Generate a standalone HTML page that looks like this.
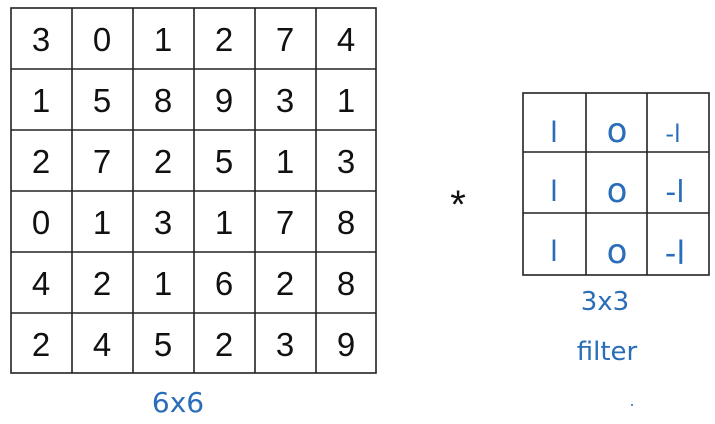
<!DOCTYPE html>
<html><head><style>
html,body{margin:0;padding:0;background:#fff;width:715px;height:424px;overflow:hidden}
</style></head><body>
<svg width="715" height="424" xmlns="http://www.w3.org/2000/svg">
<rect width="715" height="424" fill="#fff"/>
<g stroke="#222" stroke-width="1.6" fill="none">
<rect x="11" y="8" width="365" height="365"/>
<line x1="72" y1="8" x2="72" y2="373"/><line x1="133" y1="8" x2="133" y2="373"/><line x1="194" y1="8" x2="194" y2="373"/><line x1="255" y1="8" x2="255" y2="373"/><line x1="316" y1="8" x2="316" y2="373"/>
<line x1="11" y1="69" x2="376" y2="69"/><line x1="11" y1="130" x2="376" y2="130"/><line x1="11" y1="191" x2="376" y2="191"/><line x1="11" y1="252" x2="376" y2="252"/><line x1="11" y1="313" x2="376" y2="313"/>
<rect x="523" y="93" width="186" height="182"/>
<line x1="586" y1="93" x2="586" y2="275"/><line x1="647" y1="93" x2="647" y2="275"/>
<line x1="523" y1="152" x2="709" y2="152"/><line x1="523" y1="213" x2="709" y2="213"/>
</g>
<g font-family="Liberation Sans, sans-serif" font-size="33" fill="#111" text-anchor="middle">
<text x="41" y="51">3</text><text x="102" y="51">0</text><text x="163" y="51">1</text><text x="224" y="51">2</text><text x="285" y="51">7</text><text x="346" y="51">4</text>
<text x="41" y="112">1</text><text x="102" y="112">5</text><text x="163" y="112">8</text><text x="224" y="112">9</text><text x="285" y="112">3</text><text x="346" y="112">1</text>
<text x="41" y="173">2</text><text x="102" y="173">7</text><text x="163" y="173">2</text><text x="224" y="173">5</text><text x="285" y="173">1</text><text x="346" y="173">3</text>
<text x="41" y="234">0</text><text x="102" y="234">1</text><text x="163" y="234">3</text><text x="224" y="234">1</text><text x="285" y="234">7</text><text x="346" y="234">8</text>
<text x="41" y="295">4</text><text x="102" y="295">2</text><text x="163" y="295">1</text><text x="224" y="295">6</text><text x="285" y="295">2</text><text x="346" y="295">8</text>
<text x="41" y="356">2</text><text x="102" y="356">4</text><text x="163" y="356">5</text><text x="224" y="356">2</text><text x="285" y="356">3</text><text x="346" y="356">9</text>
<text x="458" y="218" font-size="40">*</text>
</g>
<g font-family="DejaVu Sans, sans-serif" fill="#2a6db8" text-anchor="middle">
<text x="554" y="142" font-size="30" font-family="Liberation Sans, sans-serif">l</text>
<text x="617" y="142" font-size="34">o</text>
<text x="673" y="142" font-size="24">-l</text>
<text x="554" y="201" font-size="30" font-family="Liberation Sans, sans-serif">l</text>
<text x="617" y="202" font-size="34">o</text>
<text x="675" y="202" font-size="30">-l</text>
<text x="554" y="261" font-size="30" font-family="Liberation Sans, sans-serif">l</text>
<text x="617" y="263" font-size="34">o</text>
<text x="675" y="264" font-size="32">-l</text>
<text x="605" y="310" font-size="26">3x3</text>
<text x="607" y="360" font-size="26">filter</text>
<text x="178" y="412" font-size="28">6x6</text>
</g>
<circle cx="632" cy="405" r="1" fill="#2a6db8"/>
</svg>
</body></html>
